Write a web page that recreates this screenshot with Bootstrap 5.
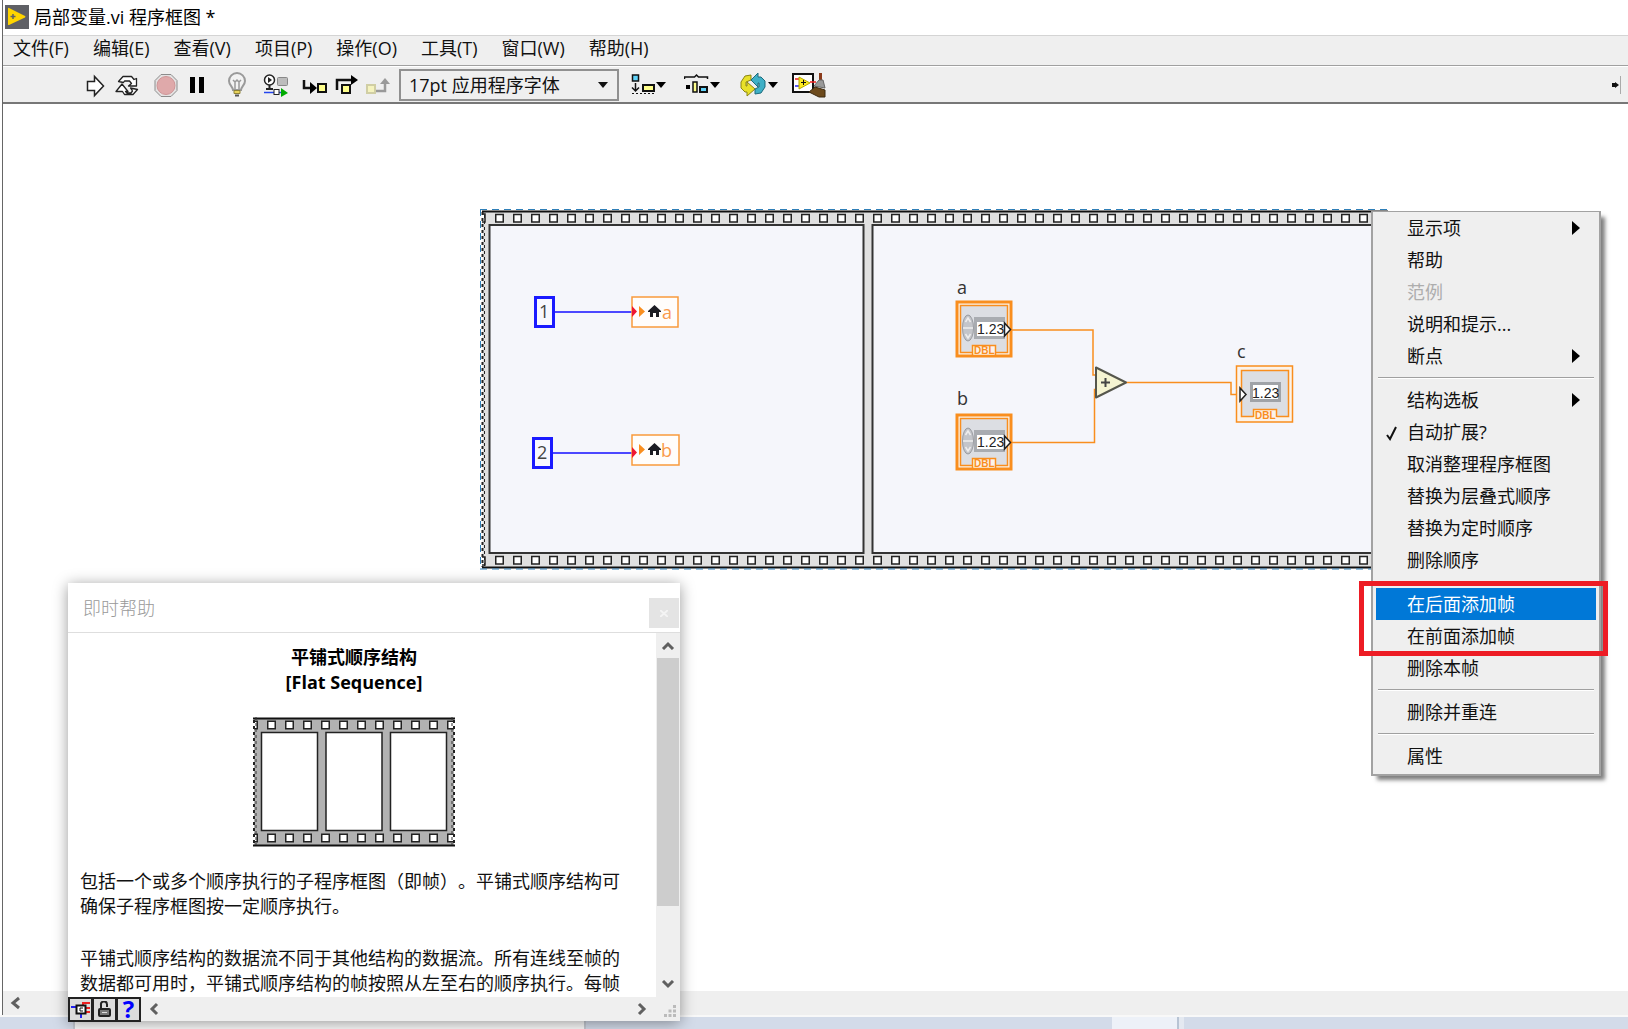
<!DOCTYPE html>
<html lang="zh-CN">
<head>
<meta charset="utf-8">
<meta name="viewport" content="width=device-width, initial-scale=1">
<title>局部变量.vi 程序框图 *</title>
<link rel="stylesheet" href="https://cdn.jsdelivr.net/npm/bootstrap@5.3.0/dist/css/bootstrap.min.css">
<style>
:root { --face:#efefef; --wire:#f98e1e; --ink:#111; }
body { font-family:"Open Sans","Noto Sans CJK SC",sans-serif; font-size:18px; line-height:26px; color:var(--ink); background:#fff; overflow:hidden; text-spacing-trim:space-all; }
svg { display:block; flex:none; }
.app-window { border-left:1px solid #666; margin-left:2px; }
.title-row { height:35px; line-height:24px; color:#000; padding:0 0 2px 2px; gap:5px; }
.menu-row { height:31px; background:var(--face); border-top:1px solid #d4d4d4; border-bottom:1px solid #a0a0a0; gap:24px; padding-left:10px; }
.menu-row .nav-link { padding:0; color:var(--ink); line-height:24px; }
.tool-row { height:38px; background:var(--face); border-top:1px solid #fff; border-bottom:2px solid #777; padding-left:82px; }
.tool-row .btn { padding:0; border:0; border-radius:0; }
.font-pick { width:220px; height:32px; margin:0 11px 0 9px; padding:0 30px 0 8px; border:2px solid #909090; border-radius:0; font-size:18px; line-height:26px; color:var(--ink); background-color:var(--face); background-size:10px 6px; background-position:right 9px center; background-image:url("data:image/svg+xml,%3csvg xmlns='http://www.w3.org/2000/svg' viewBox='0 0 12 7'%3e%3cpath d='M0 0h12L6 7z' fill='%23111'/%3e%3c/svg%3e"); }
.scroll-row { height:24px; background:var(--face); padding-left:6px; }
.desk-strip { height:14px; border-top:2px solid #f8f8f8; background:#d3dbe9; }
.desk-a { width:73px; } .desk-b { width:513px; background:#fafafa; border-left:2px solid #c5cad3; border-right:2px solid #c5cad3; }
.desk-c { width:526px; } .desk-d { width:67px; background:#edf1f8; border-right:2px solid #b8c4d4; } .desk-e { width:5px; background:#e4e9f1; }
.diagram { left:477px; top:104px; }
.block-svg text { font-family:"Open Sans","Noto Sans CJK SC",sans-serif; font-size:18px; }
.block-svg .num { font-family:"Liberation Sans",sans-serif; font-size:14px; fill:#222; }
.block-svg .dbl { font-family:"Liberation Sans",sans-serif; font-size:10px; font-weight:bold; fill:var(--wire); }

.ctx-menu { left:1368px; top:107px; width:230px; background:var(--face); border:2px solid #a2a2a2; border-top-width:1px; border-radius:0; padding:0 3px 2px; box-shadow:5px 5px 4px -1px rgba(0,0,0,.5); font-size:18px; }
.ctx-menu .dropdown-item { height:32px; padding:0 16px 0 10px; line-height:32px; color:var(--ink); display:flex; align-items:center; }
.ctx-menu .dropdown-item.active { background:#0078d7; color:#fff; }
.ctx-menu .dropdown-item.disabled { color:#adadad; }
.ctx-menu .tick { width:21px; }
.ctx-menu hr { margin:5px 2px; height:2px; border:0; border-top:1px solid #a0a0a0; border-bottom:1px solid #fff; opacity:1; }
.mark-box { left:1356px; top:477px; width:249px; height:75px; border:5px solid #ed1c24; pointer-events:none; z-index:1010; }

.help-win { left:65px; bottom:-6px; width:612px; background:#fff; box-shadow:0 2px 14px rgba(0,0,0,.4); }
.help-head { height:50px; border-bottom:1px solid #dedede; padding-left:15px; color:#999; }
.help-head .caption-text { font-weight:300; }
.help-close { width:30px; height:30px; margin:15px 1px 0 0; padding:0; border:0; border-radius:0; background:#e4e4e4; }
.help-body { height:364px; overflow:hidden; padding:12px 28px 0 12px; line-height:25px; }
.help-body h1 { font-size:18px; line-height:25px; font-weight:700; margin:0 0 22px; color:#000; }
.help-body .film { margin:0 auto 22px; }
.help-body p { margin:0 0 27px; }
.help-bar { width:24px; flex:none; background:var(--face); }
.help-bar .thumb { height:248px; background:#cdcdcd; width:22px; }
.help-foot { height:24px; background:var(--face); padding-right:32px; }
.help-foot .btn { width:25px; height:25px; margin:0 -1px 0 0; padding:0; border:2px solid #222; border-radius:0; background:#dcdcdc; display:flex; align-items:center; justify-content:center; }
.help-foot .q { color:#00f; font-weight:700; font-size:24px; line-height:20px; }
.plain-btn { border:0; background:none; padding:0; }
</style>
<script src="https://cdn.jsdelivr.net/npm/bootstrap@5.3.0/dist/js/bootstrap.bundle.min.js"></script>
</head>
<body class="vh-100 d-flex flex-column">
<div class="app-window d-flex flex-column flex-fill">
  <header class="title-row d-flex align-items-center">
    <svg width="24" height="24" viewBox="0 0 24 24"><path fill="#5f6065" d="M0 0h24v24H0z"/><path fill="#ffd500" d="M3 3.500Q3 2.500 4 3l16 8q1 .7 0 1.400L4 20q-1 .3-1-.8z"/><path stroke="#5f6065" stroke-width="1.500" d="M5.500 11.500h5M8 9v5"/></svg>
    <span>局部变量.vi 程序框图 *</span>
  </header>
  <nav class="menu-row nav flex-nowrap">
    <a class="nav-link" href="#">文件(F)</a><a class="nav-link" href="#">编辑(E)</a><a class="nav-link" href="#">查看(V)</a><a class="nav-link" href="#">项目(P)</a><a class="nav-link" href="#">操作(O)</a><a class="nav-link" href="#">工具(T)</a><a class="nav-link" href="#">窗口(W)</a><a class="nav-link" href="#">帮助(H)</a>
  </nav>
  <div class="tool-row d-flex align-items-center">
    <button class="btn" aria-label="运行"><svg width="30" height="26" viewBox="85 72 30 26"><path d="M87.500 81.500h7v-5l9 9.500-9 9.500v-5h-7z" fill="#fff" stroke="#222" stroke-width="1.500"/></svg></button>
    <button class="btn" aria-label="连续运行"><svg width="37" height="26" viewBox="115 72 37 26"><g fill="#fff" stroke="#222" stroke-width="1.300" stroke-linejoin="round"><path d="M118.500 81.500l4.500-5h8.500l2.500 3 2.500-1v7.500h-8l3-2.500-2-2.500h-5l-1 1.500z"/><path d="M137.500 89.500l-4.500 5h-8.500l-2-3H116l6-7.500 6 7.500h-2.500l1.500 1.500h4l1.500-2-2-3z"/></g></svg></button>
    <button class="btn" aria-label="中止"><svg width="34" height="26" viewBox="152 72 34 26"><path d="M161 74.500h10l6 6v10l-6 6h-10l-6-6v-10z" fill="#e4e2e2" stroke="#8c8c8c"/><circle cx="166" cy="85.500" r="9" fill="#dfa9aa" stroke="#cf9496"/></svg></button>
    <button class="btn" aria-label="暂停"><svg width="38" height="26" viewBox="186 72 38 26"><path d="M190 77h5v16h-5zM199 77h5v16h-5z" fill="#000"/></svg></button>
    <button class="btn" aria-label="高亮显示执行过程"><svg width="36" height="26" viewBox="224 72 36 26"><path d="M233 90c0-3-4-5-4-9a8 8 0 0 1 16 0c0 4-4 6-4 9z" fill="#f2f2f2" stroke="#9a9a9a" stroke-width="2"/><path d="M233 80l2 2 2-2 2 2 2-2M235 82v7M239 82v7" fill="none" stroke="#999" stroke-width="1.500"/><path d="M234 90.500h6v3h-6z" fill="#e8d35c" stroke="#8f8235"/><path d="M235 95.500h4" stroke="#555" stroke-width="2"/></svg></button>
    <button class="btn" aria-label="保存连线值"><svg width="39" height="26" viewBox="260 72 39 26"><circle cx="269.500" cy="80" r="5" fill="#fff" stroke="#222" stroke-width="1.500"/><path d="M268 77v6l4-3z" fill="#222"/><path d="M269.500 85v5M266 89h7" stroke="#222" stroke-width="2"/><rect x="277.500" y="77.500" width="10" height="8" rx="1" fill="#bcbcbc" stroke="#888"/><path d="M264 92.500h22" stroke="#2446ee" stroke-width="1.500"/><rect x="274" y="89.500" width="5" height="5" fill="#fff" stroke="#222"/><path d="M281 88l7 5-7 4z" fill="#0a0"/></svg></button>
    <button class="btn" aria-label="单步步入"><svg width="34" height="26" viewBox="299 72 34 26"><path d="M304 80v8h8" fill="none" stroke="#111" stroke-width="2.500"/><path d="M310 82l7 6-7 6z"/><rect x="318" y="84" width="8" height="8" fill="#ffff8c" stroke="#111" stroke-width="2"/></svg></button>
    <button class="btn" aria-label="单步步过"><svg width="30" height="26" viewBox="333 72 30 26"><path d="M337 90V80h16" fill="none" stroke="#111" stroke-width="2.500"/><path d="M351 75l7 5-7 5z"/><rect x="342" y="85" width="8" height="8" fill="#ffff8c" stroke="#111" stroke-width="2"/></svg></button>
    <button class="btn" aria-label="单步步出"><svg width="27" height="26" viewBox="363 72 27 26"><rect x="367" y="85" width="8" height="8" fill="#f5f3be" stroke="#d0cea4" stroke-width="2"/><path d="M376 91h9v-9" fill="none" stroke="#999" stroke-width="2.500"/><path d="M380 84l5-6 5 6z" fill="#999"/></svg></button>
    <select class="form-select font-pick" aria-label="字体"><option>17pt 应用程序字体</option></select>
    <button class="btn" aria-label="对齐对象"><svg width="54" height="26" viewBox="630 72 54 26"><rect x="632.500" y="75" width="6" height="6" fill="#62d4fa" stroke="#111" stroke-width="1.500"/><path d="M635.500 83v7M632 87.500l3.500 3.500 3.500-3.500" stroke="#111" stroke-width="1.500" fill="none"/><rect x="643" y="85" width="11" height="6" fill="#ffff8c" stroke="#111" stroke-width="2"/><path d="M632 93.500h22" stroke="#111" stroke-dasharray="2 2"/><path d="M656 82h10l-5 6z"/></svg></button>
    <button class="btn" aria-label="分布对象"><svg width="55" height="26" viewBox="684 72 55 26"><path d="M684.500 79v-2h10l2-2 2 2h9v2" fill="none" stroke="#111" stroke-width="1.500"/><path d="M686 85h4v4h-4z"/><rect x="693" y="82" width="4" height="10" fill="#ffff8c" stroke="#111" stroke-width="1.500"/><rect x="700" y="87" width="7" height="5" fill="#62d4fa" stroke="#111" stroke-width="2"/><path d="M710 82h10l-5 6z"/></svg></button>
    <button class="btn" aria-label="重新排序"><svg width="52" height="26" viewBox="739 72 52 26"><path d="M751 75l-6 1-4 6v6l4 4h2v4l8-7-8-7v4h-1v-4l5-2z" fill="#e8e02a" stroke="#8b8412"/><path d="M755 94l6-1 4-6v-6l-4-4h-3v-4l-7 7 7 7v-4h1v4l-4 2z" fill="#3fb0c6" stroke="#1d6b7c"/><path d="M768 82h10l-5 6z"/></svg></button>
    <button class="btn" aria-label="整理程序框图"><svg width="36" height="26" viewBox="791 72 36 26"><rect x="793" y="74" width="20" height="18" fill="#fff" stroke="#111" stroke-width="2"/><path d="M795 79h4M810 82h6" stroke="#e22" stroke-width="1.500"/><path d="M795 86h4" stroke="#22e" stroke-width="1.500"/><path d="M799 77l11 6-11 6z" fill="#ffec1e" stroke="#b5a900"/><path d="M801 82.500h5M803.500 80v5" stroke="#111"/><path d="M819 73h3v8h-3z" fill="#8a3a1a"/><path d="M814 86l5-6h4l2 8z" fill="#999" stroke="#666"/><path d="M809 92l6-5 10 3v7h-6z" fill="#6d4a1c" stroke="#3d2a10"/></svg></button>
    <svg class="ms-auto me-1" width="12" height="20" viewBox="0 0 12 20"><path d="M0 8h3v4H0zM3 7l4 3-4 3z" fill="#111"/><path d="M8.500 1v18" stroke="#aaa"/></svg>
  </div>

  <main class="position-relative flex-fill">
    <div class="diagram position-absolute">
      <svg class="block-svg" width="908" height="362" viewBox="480 208 908 362" role="img" aria-label="平铺式顺序结构程序框图">
        <defs>
          <pattern id="perf" patternUnits="userSpaceOnUse" x="490" y="0" width="18" height="1029"><path d="M5.750 214.500h7.500v7.500h-7.500zM5.750 556.500h7.500v7.500h-7.500z" fill="#fff" stroke="#222" stroke-width="1.500"/></pattern>
          <g id="ctl">
            <rect x="2" y="2" width="54" height="54" fill="#fbf3ea" stroke="#f98e1e" stroke-width="3"/>
            <rect x="5.500" y="5.500" width="47" height="47" fill="#dcdee3" stroke="#f98e1e" stroke-width="1.500"/>
            <rect x="19" y="17" width="31" height="22" fill="#a9acb1"/><rect x="22" y="22" width="27" height="14" fill="#fff"/>
            <ellipse cx="13" cy="28" rx="5.500" ry="13" fill="#c3c5ca" stroke="#9a9ca1"/>
            <path d="M10.500 22l2.500-4 2.500 4M10.500 34l2.500 4 2.500-4M8 28h10" fill="none" stroke="#eee" stroke-width="1.500"/>
            <text class="num" x="22" y="34">1.23</text>
            <path d="M49.500 23v13l6-6.500z" fill="#fff" stroke="#222" stroke-width="1.500"/>
            <path d="M17.500 55.500V45.500h23V55.500z" fill="#fbf3ea" stroke="#f98e1e" stroke-width="1.500"/><text class="dbl" x="19" y="54">DBL</text>
          </g>
          <path id="house" d="M0 7l6.500-6L13 7v1h-2v5H8V9H5v4H2V8H0z" fill="#1c1c22"/>
        </defs>
        <path d="M482.500 211H1386v357H482.500z" fill="#e0e0e0"/>
        <path d="M482 214h3v8h-3M482 557h3v8h-3" fill="#fff" stroke="#222" stroke-width="1.500"/>
        <path d="M490 212h896v355H490z" fill="url(#perf)"/>
        <path d="M482 211.500h906M482 567.500h906" stroke="#111" stroke-width="2"/>
        <path d="M482.500 212v355" stroke="#222" stroke-width="2" stroke-dasharray="3 3"/><path d="M484.500 215v352" stroke="#222" stroke-dasharray="3 3"/>
        <path d="M480 209.500h908M480 569h908M480.500 209v360" stroke="#2f7fb8" stroke-dasharray="7 5"/>
        <path d="M489.500 225h374v328h-374zM872.500 225H1400v328H872.500z" fill="#f5f6fb" stroke="#333" stroke-width="2"/>

        <path d="M555 312h77M553 453h79" stroke="#4c48ff" stroke-width="2"/>
        <path d="M535.500 297.500h18v29h-18zM533.500 438.500h18v29h-18z" fill="#f8f8ff" stroke="#1a1aff" stroke-width="3"/>
        <text x="539" y="318" fill="#444">1</text><text x="537" y="459" fill="#444">2</text>
        <path d="M632 297h46v30h-46zM632 435h47v30h-47z" fill="#fffdfb" stroke="#f99a3c" stroke-width="1.500"/>
        <path d="M632 306v11l5-5.500zM632 447v11l5-5.500z" fill="#f01830"/>
        <path d="M639 306v11l6-5.500zM639 444v11l6-5.500z" fill="#f98e1e"/>
        <use href="#house" x="648" y="304"/><use href="#house" x="648" y="442"/>
        <text x="662" y="319" fill="#f99a4c">a</text><text x="661" y="457" fill="#f99a4c">b</text>

        <path d="M1011 330h82v45h4M1011 442.500h83.500v-53h3M1126 382.500h105v12h6" fill="none" stroke="#f98e1e" stroke-width="1.500"/>
        <path d="M1096 367.500v30l30-15z" fill="#f5f4d2" stroke="#55564c" stroke-width="2" stroke-linejoin="round"/>
        <path d="M1101 382.500h9M1105.500 378v9" stroke="#444" stroke-width="2"/>
        <text x="957" y="294" fill="#333">a</text><text x="957" y="405" fill="#333">b</text><text x="1237" y="358" fill="#333">c</text>
        <use href="#ctl" x="955" y="300"/><use href="#ctl" x="955" y="413"/>
        <path d="M1236.500 366h56v56h-56z" fill="#fbf3ea" stroke="#f98e1e" stroke-width="1.500"/>
        <path d="M1241.500 370.500h47v46h-47z" fill="#dcdee3" stroke="#f98e1e" stroke-width="1.500"/>
        <path d="M1250 382h31v20h-31z" fill="#a0a3a8"/><path d="M1253 385h25v14h-25z" fill="#fff"/>
        <text class="num" x="1252" y="398">1.23</text>
        <path d="M1240 388v13l6-6.500z" fill="#fff" stroke="#222" stroke-width="1.500"/>
        <path d="M1253.500 420v-10.500h23V420z" fill="#fbf3ea"/><path d="M1253.500 417v-7.500h23v7.500" fill="none" stroke="#f98e1e" stroke-width="1.500"/>
        <text class="dbl" x="1255" y="419">DBL</text>
      </svg>
    </div>

    <div class="ctx-menu dropdown-menu d-block position-absolute">
      <a class="dropdown-item" href="#"><span class="tick"></span>显示项<svg class="ms-auto" width="8" height="14"><path d="M0 0l8 7-8 7z"/></svg></a>
      <a class="dropdown-item" href="#"><span class="tick"></span>帮助</a>
      <a class="dropdown-item disabled" href="#" aria-disabled="true"><span class="tick"></span>范例</a>
      <a class="dropdown-item" href="#"><span class="tick"></span>说明和提示...</a>
      <a class="dropdown-item" href="#"><span class="tick"></span>断点<svg class="ms-auto" width="8" height="14"><path d="M0 0l8 7-8 7z"/></svg></a>
      <hr>
      <a class="dropdown-item" href="#"><span class="tick"></span>结构选板<svg class="ms-auto" width="8" height="14"><path d="M0 0l8 7-8 7z"/></svg></a>
      <a class="dropdown-item" href="#"><span class="tick"><svg width="12" height="18" viewBox="0 0 12 18"><path d="M1 12l3 4 6-12" fill="none" stroke="#111" stroke-width="2"/></svg></span>自动扩展?</a>
      <a class="dropdown-item" href="#"><span class="tick"></span>取消整理程序框图</a>
      <a class="dropdown-item" href="#"><span class="tick"></span>替换为层叠式顺序</a>
      <a class="dropdown-item" href="#"><span class="tick"></span>替换为定时顺序</a>
      <a class="dropdown-item" href="#"><span class="tick"></span>删除顺序</a>
      <hr>
      <a class="dropdown-item active" href="#"><span class="tick"></span>在后面添加帧</a>
      <a class="dropdown-item" href="#"><span class="tick"></span>在前面添加帧</a>
      <a class="dropdown-item" href="#"><span class="tick"></span>删除本帧</a>
      <hr>
      <a class="dropdown-item" href="#"><span class="tick"></span>删除并重连</a>
      <hr>
      <a class="dropdown-item" href="#"><span class="tick"></span>属性</a>
    </div>
    <div class="mark-box position-absolute"></div>
  </main>

  <div class="scroll-row position-relative d-flex align-items-center">
    <button class="plain-btn" aria-label="向左滚动"><svg width="12" height="14" viewBox="0 0 12 14"><path d="M10 2L4 7l6 5" fill="none" stroke="#606060" stroke-width="3"/></svg></button>

    <section class="help-win position-absolute z-3">
      <header class="help-head d-flex">
        <span class="caption-text my-auto">即时帮助</span>
        <button class="help-close btn ms-auto d-flex align-items-center justify-content-center" aria-label="关闭"><svg width="8" height="7"><path d="M0 0l8 7M8 0L0 7" stroke="#f4f4f4" stroke-width="2"/></svg></button>
      </header>
      <div class="d-flex">
        <div class="help-body flex-fill">
          <h1 class="text-center">平铺式顺序结构<br>[Flat Sequence]</h1>
          <svg class="film" width="202" height="130" viewBox="0 0 202 130" role="img" aria-label="平铺式顺序结构示意图">
            <defs><pattern id="perf2" patternUnits="userSpaceOnUse" x="-5" y="0" width="18" height="130"><path d="M1.750 4.250h7.500v7.500h-7.500zM1.750 117.250h7.500v7.500h-7.500z" fill="#fff" stroke="#222" stroke-width="1.500"/></pattern></defs>
            <path d="M1 1h200v128H1z" fill="#b2b2b2"/><path d="M1 1h200v128H1z" fill="url(#perf2)"/>
            <path d="M0 1.500h202M0 128.500h202" stroke="#111" stroke-width="2"/>
            <path d="M1 3v124M201 3v124" stroke="#222" stroke-width="2" stroke-dasharray="3 3"/><path d="M3 0v128M199 0v128" stroke="#333" stroke-dasharray="3 3"/>
            <path d="M8.500 15.500h56v98h-56zM73 15.500h56v98H73zM137.500 15.500h56v98h-56z" fill="#fff" stroke="#222" stroke-width="1.500"/>
          </svg>
          <p>包括一个或多个顺序执行的子程序框图（即帧）。平铺式顺序结构可确保子程序框图按一定顺序执行。</p>
          <p>平铺式顺序结构的数据流不同于其他结构的数据流。所有连线至帧的数据都可用时，平铺式顺序结构的帧按照从左至右的顺序执行。每帧</p>
        </div>
        <div class="help-bar d-flex flex-column align-items-center">
          <button class="plain-btn py-2" aria-label="向上滚动"><svg width="14" height="9" viewBox="0 0 14 9"><path d="M2 8l5-5 5 5" fill="none" stroke="#606060" stroke-width="3"/></svg></button>
          <div class="thumb"></div>
          <button class="plain-btn mt-auto pb-2" aria-label="向下滚动"><svg width="14" height="9" viewBox="0 0 14 9"><path d="M2 1l5 5 5-5" fill="none" stroke="#606060" stroke-width="3"/></svg></button>
        </div>
      </div>
      <footer class="help-foot d-flex align-items-center">
        <button class="btn" aria-label="显示可选接线端"><svg width="20" height="18" viewBox="0 0 20 18"><path d="M0 7h6M10 13v5" stroke="#22e" stroke-width="2"/><path d="M19 3h-7v4M13 8h6M13 12h6" fill="none" stroke="#e22" stroke-width="2"/><rect x="5.500" y="5.500" width="9" height="8" fill="#fff" stroke="#111" stroke-width="2"/><path d="M12 8H9v3h3" fill="none" stroke="#111"/></svg></button>
        <button class="btn" aria-label="锁定"><svg width="14" height="17" viewBox="0 0 14 17"><path d="M3 8V4a3 3 0 0 1 6-1M9 3v3" fill="none" stroke="#222" stroke-width="2"/><rect x="1" y="8" width="11" height="7" rx="1" fill="#777" stroke="#222" stroke-width="2"/><path d="M4 11.500h5" stroke="#ddd"/></svg></button>
        <button class="btn q" aria-label="详细帮助">?</button>
        <button class="plain-btn ms-2" aria-label="向左滚动"><svg width="12" height="14" viewBox="0 0 12 14"><path d="M9 2L4 7l5 5" fill="none" stroke="#606060" stroke-width="3"/></svg></button>
        <button class="plain-btn ms-auto" aria-label="向右滚动"><svg width="12" height="14" viewBox="0 0 12 14"><path d="M3 2l5 5-5 5" fill="none" stroke="#606060" stroke-width="3"/></svg></button>
      </footer>
      <svg class="position-absolute bottom-0 end-0 me-1 mb-1" width="12" height="12"><path d="M9 0h3v3H9zM9 4.500h3v3H9zM9 9h3v3H9zM4.500 4.500h3v3h-3zM4.500 9h3v3h-3zM0 9h3v3H0z" fill="#bbb"/></svg>
    </section>
  </div>
</div>
<div class="desk-strip d-flex">
  <div class="desk-a"></div><div class="desk-b"></div><div class="desk-c"></div><div class="desk-d"></div><div class="desk-e"></div>
</div>
</body>
</html>
